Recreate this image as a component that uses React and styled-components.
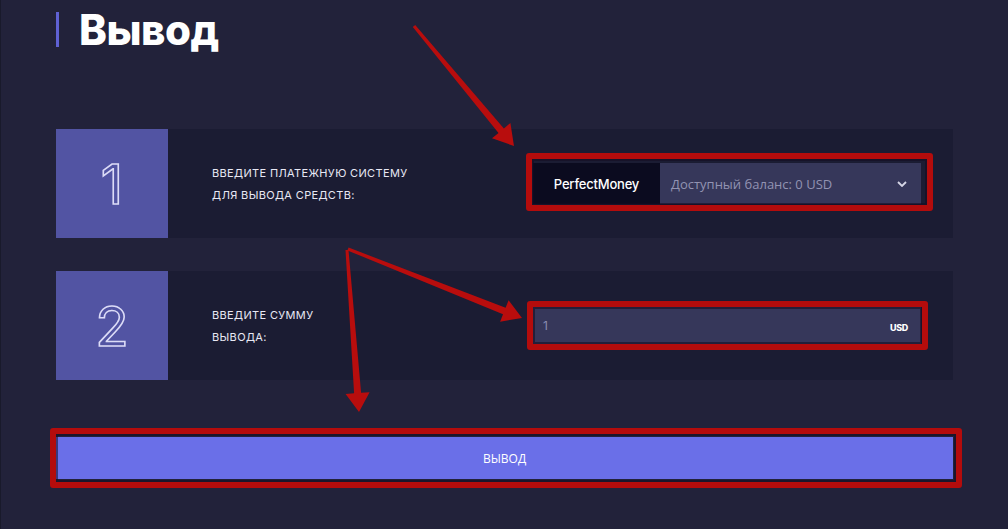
import React from 'react'
import styled, { createGlobalStyle } from 'styled-components'

const GlobalStyle = createGlobalStyle`
  html, body {
    margin: 0;
    padding: 0;
    background: #22223a;
  }
  * { box-sizing: border-box; }
`;

const Page = styled.div`
  position: relative;
  min-height: 100vh;
  padding: 12px 55px 40px 55px;
  background: #22223a;
  border-left: 1px solid #191a2b;
  font-family: Inter, "Open Sans", sans-serif;
`;

const Header = styled.div`
  display: flex;
  align-items: center;
  gap: 21px;
  height: 35px;
`;

const Bar = styled.span`
  width: 3px;
  height: 35px;
  background: #5f61d4;
`;

const Title = styled.h1`
  margin: 0 0 0 -1px;
  font-size: 42px;
  line-height: 35px;
  font-weight: 800;
  color: #fff;
  letter-spacing: -0.5px;
`;

const Steps = styled.div`
  display: flex;
  flex-direction: column;
  gap: 33px;
  margin-top: 82px;
`;

const Step = styled.div`
  display: grid;
  grid-template-columns: 112px 1fr 388px;
  align-items: center;
  height: 109px;
  padding-right: 32px;
  background: #1b1c33;
`;

const Number = styled.div`
  display: flex;
  align-items: center;
  justify-content: center;
  height: 100%;
  background: #5254a3;
  font-family: Inter, sans-serif;
  font-size: 55px;
  font-weight: 400;
  color: transparent;
  -webkit-text-stroke: 1.6px #dcdcf7;
`;

const Label = styled.div`
  padding-left: 44px;
  font-size: 11px;
  line-height: 22px;
  text-transform: uppercase;
  color: #e8e8f4;
  letter-spacing: 0.35px;
`;

const Marked = styled.div`
  position: relative;
  &::after {
    content: '';
    position: absolute;
    inset: ${p => p.$inset};
    border: 6px solid #b40c0c;
    border-radius: 3px;
    box-shadow: inset 0 0 0 2px rgba(20, 12, 32, 0.55);
    pointer-events: none;
  }
`;

const Select = styled.div`
  display: flex;
  height: 41px;
  background: #36375a;
`;

const System = styled.div`
  display: flex;
  align-items: center;
  justify-content: center;
  width: 127px;
  background: #0b0b1f;
  color: #fff;
  font-size: 13px;
  font-weight: 500;
  letter-spacing: -0.2px;
`;

const Balance = styled.div`
  flex: 1;
  display: flex;
  align-items: center;
  justify-content: space-between;
  padding: 0 14px 0 11px;
  color: #9293b2;
  font-family: "Open Sans", sans-serif;
  font-size: 13px;
`;

const Amount = styled.div`
  display: flex;
  align-items: center;
  justify-content: space-between;
  height: 38px;
  padding: 0 13px 0 10px;
  background: #36375a;
  color: #8a8bb0;
  font-size: 12px;
`;

const Currency = styled.span`
  color: #fff;
  font-size: 9px;
  font-weight: 800;
  letter-spacing: -0.3px;
  margin-top: 4px;
`;

const SubmitWrap = styled(Marked)`
  margin-top: 57px;
`;

const Submit = styled.button`
  display: block;
  width: 100%;
  height: 42px;
  border: 0;
  background: #6a6fe8;
  color: #fff;
  font-family: "Open Sans", sans-serif;
  font-size: 12px;
  font-weight: 500;
  cursor: pointer;
`;

const Overlay = styled.svg`
  position: absolute;
  top: 0;
  left: -1px;
  pointer-events: none;
`;

const arrowPoints = ([x1, y1], [x2, y2], tailW, shaftW, headW, headL) => {
  const len = Math.hypot(x2 - x1, y2 - y1);
  const dx = (x2 - x1) / len, dy = (y2 - y1) / len;
  const nx = -dy, ny = dx;
  const bx = x2 - dx * headL, by = y2 - dy * headL;
  const pts = [
    [x1 + nx * tailW / 2, y1 + ny * tailW / 2],
    [bx + nx * shaftW / 2, by + ny * shaftW / 2],
    [bx + nx * headW / 2, by + ny * headW / 2],
    [x2, y2],
    [bx - nx * headW / 2, by - ny * headW / 2],
    [bx - nx * shaftW / 2, by - ny * shaftW / 2],
    [x1 - nx * tailW / 2, y1 - ny * tailW / 2],
  ];
  return pts.map(p => p.map(v => v.toFixed(1)).join(',')).join(' ');
};

const arrows = [
  [[414, 26], [514, 146], 3, 7, 24, 20],
  [[348, 249], [522, 318], 3, 7, 23, 19],
  [[347, 250], [359, 412], 3, 7, 24, 19],
];

const Chevron = () => (
  <svg width="10" height="6" viewBox="0 0 10 6">
    <polyline points="1,1 5,5 9,1" fill="none" stroke="#d6d6e6" strokeWidth="1.8" />
  </svg>
);

export default function App() {
  return (
    <Page>
      <GlobalStyle />
      <Header>
        <Bar />
        <Title>Вывод</Title>
      </Header>
      <Steps>
        <Step>
          <Number>1</Number>
          <Label>Введите платежную систему<br />для вывода средств:</Label>
          <Marked $inset="-10px -12px -7px -7px">
            <Select>
              <System>PerfectMoney</System>
              <Balance>
                Доступный баланс: 0 USD
                <Chevron />
              </Balance>
            </Select>
          </Marked>
        </Step>
        <Step>
          <Number>2</Number>
          <Label>Введите сумму<br />вывода:</Label>
          <Marked $inset="-6px -7px -5px -6px">
            <Amount>
              1
              <Currency>USD</Currency>
            </Amount>
          </Marked>
        </Step>
      </Steps>
      <SubmitWrap $inset="-9px -9px -9px -6px">
        <Submit>ВЫВОД</Submit>
      </SubmitWrap>
      <Overlay width="1008" height="529">
        {arrows.map((a, i) => (
          <polygon key={i} points={arrowPoints(...a)} fill="#b80d0d" />
        ))}
      </Overlay>
    </Page>
  );
}
